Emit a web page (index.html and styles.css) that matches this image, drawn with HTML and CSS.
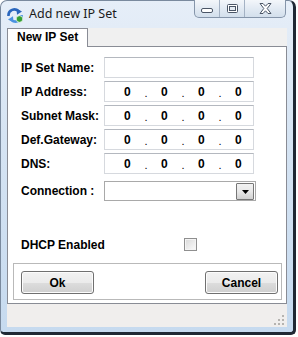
FILE: index.html
```html
<!DOCTYPE html>
<html lang="en">
<head>
    <meta charset="UTF-8">
    <title>Add new IP Set</title>
    <link rel="stylesheet" href="styles.css">
</head>
<body>
    <div class="window">
        <div class="titlebar">
            <svg class="app-icon" width="17" height="15" viewBox="0 0 17 15">
                <path d="M1.5 8 A6 6 0 0 1 12 3.5" fill="none" stroke="#2a66bd" stroke-width="2.6"/>
                <path d="M9.5 0.5 L15 3.5 L10 6.8 Z" fill="#2a66bd"/>
                <path d="M14.5 7 A6 6 0 0 1 4 11.5" fill="none" stroke="#4a92e0" stroke-width="2.6"/>
                <path d="M6.5 14.5 L1 11.5 L6 8.2 Z" fill="#4a92e0"/>
                <circle cx="12.5" cy="11" r="3.3" fill="#34a034" stroke="#e8f4e8" stroke-width="0.8"/>
            </svg>
            <span class="title">Add new IP Set</span>
            <div class="caption-buttons">
                <span class="cap-btn cap-min">
                    <svg width="12" height="6" viewBox="0 0 12 6"><rect x="0.5" y="0.5" width="11" height="4" rx="1.5" fill="#fff" stroke="#4a5566"/></svg>
                </span>
                <span class="cap-btn cap-max">
                    <svg width="11" height="9" viewBox="0 0 11 9"><rect x="0.5" y="0.5" width="10" height="8" rx="1" fill="#fff" stroke="#4a5566"/><rect x="2.5" y="2.5" width="6" height="4" fill="#e4ebf3" stroke="#4a5566"/></svg>
                </span>
                <span class="cap-btn cap-close">
                    <svg width="13" height="11" viewBox="0 0 13 11"><path d="M1 0.5 H4 L6.5 3.2 L9 0.5 H12 L8.2 5.5 L12 10.5 H9 L6.5 7.8 L4 10.5 H1 L4.8 5.5 Z" fill="#fff" stroke="#4a5566" stroke-linejoin="round"/></svg>
                </span>
            </div>
        </div>

        <div class="client">
            <div class="tabs">
                <div class="tab active">New IP Set</div>
            </div>

            <div class="tab-page">
                <div class="form-row">
                    <label class="field-label">IP Set Name:</label>
                    <div class="textbox"></div>
                </div>
                <div class="form-row">
                    <label class="field-label">IP Address:</label>
                    <div class="textbox ip-box">
                        <span class="octet">0</span><span class="dot">.</span><span class="octet">0</span><span class="dot">.</span><span class="octet">0</span><span class="dot">.</span><span class="octet">0</span>
                    </div>
                </div>
                <div class="form-row">
                    <label class="field-label">Subnet Mask:</label>
                    <div class="textbox ip-box">
                        <span class="octet">0</span><span class="dot">.</span><span class="octet">0</span><span class="dot">.</span><span class="octet">0</span><span class="dot">.</span><span class="octet">0</span>
                    </div>
                </div>
                <div class="form-row">
                    <label class="field-label">Def.Gateway:</label>
                    <div class="textbox ip-box">
                        <span class="octet">0</span><span class="dot">.</span><span class="octet">0</span><span class="dot">.</span><span class="octet">0</span><span class="dot">.</span><span class="octet">0</span>
                    </div>
                </div>
                <div class="form-row">
                    <label class="field-label">DNS:</label>
                    <div class="textbox ip-box">
                        <span class="octet">0</span><span class="dot">.</span><span class="octet">0</span><span class="dot">.</span><span class="octet">0</span><span class="dot">.</span><span class="octet">0</span>
                    </div>
                </div>

                <div class="form-row combo-row">
                    <label class="field-label">Connection :</label>
                    <div class="combo">
                        <span class="combo-btn">
                            <svg width="7" height="4" viewBox="0 0 7 4"><path d="M0 0 H7 L3.5 4 Z" fill="#000"/></svg>
                        </span>
                    </div>
                </div>

                <div class="form-row check-row">
                    <label class="field-label">DHCP Enabled</label>
                    <span class="checkbox"></span>
                </div>

                <div class="button-group">
                    <button class="btn">Ok</button>
                    <button class="btn">Cancel</button>
                </div>
            </div>

            <div class="status-strip">
                <svg class="grip" width="10" height="10" viewBox="0 0 10 10">
                    <rect x="8" y="0" width="2" height="2" fill="#b5b3b0"/>
                    <rect x="4" y="4" width="2" height="2" fill="#b5b3b0"/>
                    <rect x="8" y="4" width="2" height="2" fill="#b5b3b0"/>
                    <rect x="0" y="8" width="2" height="2" fill="#b5b3b0"/>
                    <rect x="4" y="8" width="2" height="2" fill="#b5b3b0"/>
                    <rect x="8" y="8" width="2" height="2" fill="#b5b3b0"/>
                </svg>
            </div>
        </div>
    </div>
</body>
</html>
```

FILE: styles.css
```css
* {
    margin: 0;
    padding: 0;
    box-sizing: border-box;
}

body {
    background: #ffffff;
    font-family: 'Liberation Sans', Arial, sans-serif;
    font-size: 12px;
    color: #000;
}

.window {
    width: 296px;
    height: 335px;
    display: flex;
    flex-direction: column;
    padding: 0 6px 5px 6px;
    border-left: 1px solid #7a8a9e;
    border-top: 1px solid #7a8a9e;
    border-right: 3px solid #1f2834;
    border-bottom: 3px solid #1f2834;
    border-radius: 7px 7px 5px 5px;
    background: linear-gradient(to bottom, #e6eef8 0%, #d6e4f3 40%, #c6daef 100%);
}

/* title bar */

.titlebar {
    height: 27px;
    flex-shrink: 0;
    display: flex;
    align-items: flex-start;
}

.app-icon {
    margin-top: 7px;
    flex-shrink: 0;
}

.title {
    margin-left: 5px;
    margin-top: 5px;
    line-height: 16px;
    font-family: 'Noto Sans', 'Open Sans', sans-serif;
    font-size: 12.5px;
    color: #1b1b1b;
    white-space: nowrap;
}

.caption-buttons {
    margin-left: auto;
    margin-right: 1px;
    margin-top: -1px;
    display: flex;
    height: 18px;
    border: 1px solid #8595aa;
    border-top: none;
    border-radius: 0 0 5px 5px;
    overflow: hidden;
    background: linear-gradient(to bottom, #f3f6fa 0%, #e2eaf3 50%, #d3dfec 100%);
}

.cap-btn {
    display: flex;
    align-items: center;
    justify-content: center;
    height: 100%;
}

.cap-min {
    width: 25px;
    border-right: 1px solid #a4b2c4;
    padding-top: 5px;
}

.cap-max {
    width: 25px;
    border-right: 1px solid #a4b2c4;
}

.cap-close {
    width: 40px;
}

/* client area */

.client {
    flex: 1;
    display: flex;
    flex-direction: column;
    background: #f0f0f0;
}

.tabs {
    height: 18px;
    flex-shrink: 0;
    display: flex;
    align-items: flex-end;
}

.tab {
    width: 81px;
    height: 19px;
    margin-bottom: -1px;
    padding-left: 9px;
    line-height: 17px;
    font-weight: bold;
    background: #ffffff;
    border: 1px solid #898c95;
    border-bottom: none;
    position: relative;
    z-index: 1;
}

.tab-page {
    flex: 1;
    display: flex;
    flex-direction: column;
    gap: 3px;
    padding: 10px 4px 3px 13px;
    background: #ffffff;
    border: 1px solid #898c95;
}

.form-row {
    display: flex;
    align-items: center;
    height: 21px;
}

.field-label {
    width: 83px;
    flex-shrink: 0;
    font-weight: bold;
    white-space: nowrap;
}

.textbox {
    width: 150px;
    height: 21px;
    background: #fff;
    border: 1px solid #d6d9de;
    border-top-color: #b4b8bf;
}

.ip-box {
    display: flex;
    align-items: center;
    padding-left: 19px;
}

.octet {
    font-weight: bold;
    width: 7px;
}

.dot {
    width: 30px;
    text-align: center;
    font-size: 11px;
    line-height: 12px;
    padding-top: 2px;
    color: #000;
}

.combo-row {
    margin-top: 4px;
    height: 20px;
}

.combo {
    width: 152px;
    height: 20px;
    border: 1px solid #a9a9a9;
    background: #fff;
    display: flex;
    justify-content: flex-end;
    align-items: center;
    padding-right: 1px;
}

.combo-btn {
    width: 18px;
    height: 17px;
    display: flex;
    align-items: center;
    justify-content: center;
    padding-top: 2px;
    border: 1px solid #767676;
    border-radius: 1px;
    background: linear-gradient(to bottom, #f2f2f2 0%, #e8e8e8 50%, #d0d0d0 100%);
}

.check-row {
    margin-top: 34px;
    height: 13px;
}

.checkbox {
    margin-left: 80px;
    width: 13px;
    height: 13px;
    border: 1px solid #8f8f8f;
    background: linear-gradient(135deg, #d8d8d8 0%, #eeeeee 60%, #fbfbfb 100%);
    box-shadow: inset 0 0 0 1px #f4f4f4;
}

.button-group {
    margin-top: auto;
    height: 37px;
    display: flex;
    justify-content: space-between;
    align-items: flex-start;
    margin-left: -8px;
    padding: 7px 3px 0 7px;
    border: 1px solid #b9b9b9;
    box-shadow: inset 1px 1px 0 #ffffff;
}

.btn {
    width: 73px;
    height: 23px;
    font-family: 'Liberation Sans', Arial, sans-serif;
    font-size: 12px;
    font-weight: bold;
    color: #000;
    border: 1px solid #707070;
    border-radius: 3px;
    background: linear-gradient(to bottom, #f2f2f2 0%, #ebebeb 50%, #dddddd 51%, #cfcfcf 100%);
    box-shadow: inset 0 0 0 1px #fcfcfc;
}

.status-strip {
    height: 23px;
    flex-shrink: 0;
    background: #f0eeed;
    display: flex;
    justify-content: flex-end;
    align-items: flex-end;
    padding: 0 3px 2px 0;
}
```
